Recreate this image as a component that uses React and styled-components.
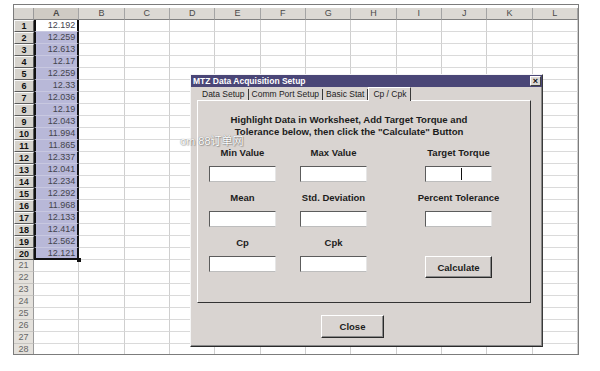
import React from 'react'
import styled, { createGlobalStyle, css } from 'styled-components'

const GlobalStyle = createGlobalStyle`
  html, body {
    margin: 0;
    padding: 0;
    background: #fff;
  }
`

const Screen = styled.div`
  position: relative;
  width: 600px;
  height: 371px;
  overflow: hidden;
  background: #fff;
  font-family: 'Liberation Sans', Arial, sans-serif;
`

const Sheet = styled.div`
  margin: 4px 0 0 13px;
  width: 566px;
  height: 351px;
  box-sizing: border-box;
  border: 1px solid #7c7c7c;
  padding-top: 3px;
  overflow: hidden;
`

const Grid = styled.div`
  display: grid;
  grid-template-columns: 20px repeat(12, 1fr);
  grid-auto-rows: 12px;
  font-size: 9px;
`

const Corner = styled.div`
  background: #d8d5d0;
  border-right: 1px solid #9a9a9a;
  border-bottom: 1px solid #808080;
  box-sizing: border-box;
`

const ColHead = styled.div`
  box-sizing: border-box;
  background: ${({ selected }) => (selected ? '#cfcbc4' : '#dcd9d4')};
  border-right: 1px solid #a4a4a4;
  border-bottom: 1px solid #808080;
  color: #4a4a4a;
  font-weight: ${({ selected }) => (selected ? 'bold' : 'normal')};
  text-align: center;
  line-height: 11px;
`

const RowHead = styled.div`
  box-sizing: border-box;
  text-align: center;
  line-height: 10px;
  ${({ selected }) =>
    selected
      ? css`
          background: #d6d3cd;
          border: 1px solid;
          border-color: #fafafa #5a5a5a #5a5a5a #fafafa;
          color: #111;
          font-weight: bold;
        `
      : css`
          background: #e4e1dc;
          border-right: 1px solid #9a9a9a;
          border-bottom: 1px solid #c8c6c2;
          color: #666;
          line-height: 11px;
        `}
`

const Cell = styled.div`
  position: relative;
  box-sizing: border-box;
  border-right: 1px solid #cfcfcf;
  border-bottom: 1px solid #dadada;
  background: #fff;
  color: #44444c;
  text-align: right;
  padding-right: 2px;
  line-height: 11px;
  ${({ selected, active }) =>
    selected &&
    css`
      background: ${active ? '#fff' : '#b8b8d8'};
      border-left: 2px solid #111;
      border-right: 2px solid #111;
      border-bottom-color: #c8c8e0;
    `}
  ${({ last }) =>
    last &&
    css`
      border-bottom: 2px solid #111;
      line-height: 10px;
      &::after {
        content: '';
        position: absolute;
        right: -4px;
        bottom: -4px;
        width: 4px;
        height: 4px;
        background: #111;
        z-index: 1;
      }
    `}
`

const Window = styled.div`
  position: absolute;
  left: 190px;
  top: 74px;
  width: 353px;
  height: 273px;
  box-sizing: border-box;
  background: #d9d4d1;
  border: 1px solid;
  border-color: #f6f6f6 #3a3a3a #2a2a2a #f6f6f6;
  box-shadow: inset -1px -1px #8a8a8a;
`

const TitleBar = styled.div`
  height: 12px;
  background: #4a4677;
  display: flex;
  align-items: center;
  justify-content: space-between;
  padding: 0 1px 0 2px;
  color: #fff;
  font-size: 8.5px;
  font-weight: bold;
`

const CloseBox = styled.div`
  width: 9px;
  height: 8px;
  box-sizing: content-box;
  background: #dcd8d4;
  border: 1px solid;
  border-color: #fff #404040 #404040 #fff;
  color: #111;
  font-size: 9px;
  line-height: 8px;
  text-align: center;
  font-weight: bold;
`

const Tabs = styled.div`
  display: flex;
  align-items: flex-end;
  height: 13px;
  padding-left: 8px;
  font-size: 8.5px;
  color: #222;
`

const Tab = styled.div`
  height: 11px;
  line-height: 11px;
  padding: 0 3px;
  white-space: nowrap;
  ${({ active }) =>
    active
      ? css`
          position: relative;
          z-index: 1;
          height: 14px;
          line-height: 13px;
          margin-bottom: -1px;
          padding: 0 4px;
          background: #d9d4d1;
          border-top: 1px solid #fff;
          border-left: 1px solid #fff;
          border-right: 1px solid #3a3a3a;
          box-sizing: border-box;
        `
      : css`
          border-right: 1px solid #3a3a3a;
        `}
`

const Panel = styled.div`
  margin-left: 6px;
  width: 334px;
  height: 203px;
  box-sizing: border-box;
  border: 1px solid;
  border-color: #fff #333 #333 #fff;
`

const Instructions = styled.div`
  padding-top: 13px;
  width: 302px;
  text-align: center;
  font-size: 9.6px;
  font-weight: bold;
  line-height: 12px;
  color: #1c1c1c;
  white-space: nowrap;
`

const Fields = styled.div`
  margin-top: 9px;
  padding-left: 11px;
  display: grid;
  grid-template-columns: 91px 125px 67px;
  row-gap: 10px;
`

const Field = styled.div`
  width: 67px;
  display: flex;
  flex-direction: column;
  align-items: center;
`

const Label = styled.div`
  height: 12px;
  line-height: 12px;
  margin-bottom: 7px;
  font-size: 9.5px;
  font-weight: bold;
  color: #1c1c1c;
  white-space: nowrap;
`

const TextBox = styled.div`
  position: relative;
  width: 67px;
  height: 16px;
  box-sizing: border-box;
  background: #fff;
  border: 1px solid;
  border-color: #5c5c5c #e6e6e6 #bdbdbd #5c5c5c;
  ${({ caret }) =>
    caret &&
    css`
      &::after {
        content: '';
        position: absolute;
        left: 35px;
        top: 1px;
        width: 1px;
        height: 12px;
        background: #111;
      }
    `}
`

const Button = styled.div`
  width: ${({ w }) => w}px;
  height: ${({ h }) => h}px;
  box-sizing: border-box;
  display: flex;
  align-items: center;
  justify-content: center;
  background: #d9d4d1;
  border: 1px solid;
  border-color: #fff #2a2a2a #2a2a2a #fff;
  box-shadow: inset -1px -1px #8a8a8a;
  font-size: 9.5px;
  font-weight: bold;
  color: #1c1c1c;
`

const CalcButton = styled(Button)`
  margin-top: 19px;
`

const CloseButton = styled(Button)`
  margin: 12px 0 0 130px;
`

const Watermark = styled.div`
  position: absolute;
  left: 180px;
  top: 137px;
  font-family: 'Liberation Sans', 'Noto Sans CJK SC', sans-serif;
  font-size: 11px;
  line-height: 9px;
  color: #fff;
  text-shadow: 0 0 1px rgba(0, 0, 0, 0.55), 1px 1px 1px rgba(0, 0, 0, 0.25);
  white-space: nowrap;
`

const columns = ['A', 'B', 'C', 'D', 'E', 'F', 'G', 'H', 'I', 'J', 'K', 'L']
const values = [
  '12.192', '12.259', '12.613', '12.17', '12.259', '12.33', '12.036', '12.19', '12.043', '11.994',
  '11.865', '12.337', '12.041', '12.234', '12.292', '11.968', '12.133', '12.414', '12.562', '12.121'
]

const SpreadSheet = () => {
  const rows = []
  for (let r = 1; r <= 28; r++) {
    const selected = r <= values.length
    rows.push(
      <RowHead key={`h${r}`} selected={selected}>{r}</RowHead>
    )
    columns.forEach((c, i) => {
      const inA = i === 0 && selected
      rows.push(
        <Cell
          key={`${c}${r}`}
          selected={inA}
          active={inA && r === 1}
          last={inA && r === values.length}
        >
          {inA ? values[r - 1] : ''}
        </Cell>
      )
    })
  }

  return (
    <Sheet>
      <Grid>
        <Corner />
        {columns.map(c => (
          <ColHead key={c} selected={c === 'A'}>{c}</ColHead>
        ))}
        {rows}
      </Grid>
    </Sheet>
  )
}

const SetupDialog = () => (
  <Window>
    <TitleBar>
      <span>MTZ Data Acquisition Setup</span>
      <CloseBox>×</CloseBox>
    </TitleBar>
    <Tabs>
      <Tab>Data Setup</Tab>
      <Tab>Comm Port Setup</Tab>
      <Tab>Basic Stat</Tab>
      <Tab active>Cp / Cpk</Tab>
    </Tabs>
    <Panel>
      <Instructions>
        Highlight Data in Worksheet, Add Target Torque and
        <br />
        Tolerance below, then click the "Calculate" Button
      </Instructions>
      <Fields>
        <Field>
          <Label>Min Value</Label>
          <TextBox />
        </Field>
        <Field>
          <Label>Max Value</Label>
          <TextBox />
        </Field>
        <Field>
          <Label>Target Torque</Label>
          <TextBox caret />
        </Field>
        <Field>
          <Label>Mean</Label>
          <TextBox />
        </Field>
        <Field>
          <Label>Std. Deviation</Label>
          <TextBox />
        </Field>
        <Field>
          <Label>Percent Tolerance</Label>
          <TextBox />
        </Field>
        <Field>
          <Label>Cp</Label>
          <TextBox />
        </Field>
        <Field>
          <Label>Cpk</Label>
          <TextBox />
        </Field>
        <Field>
          <CalcButton w={67} h={22}>Calculate</CalcButton>
        </Field>
      </Fields>
    </Panel>
    <CloseButton w={63} h={23}>Close</CloseButton>
  </Window>
)

export default function App() {
  return (
    <Screen>
      <GlobalStyle />
      <SpreadSheet />
      <SetupDialog />
      <Watermark>om 88订单网</Watermark>
    </Screen>
  )
}
